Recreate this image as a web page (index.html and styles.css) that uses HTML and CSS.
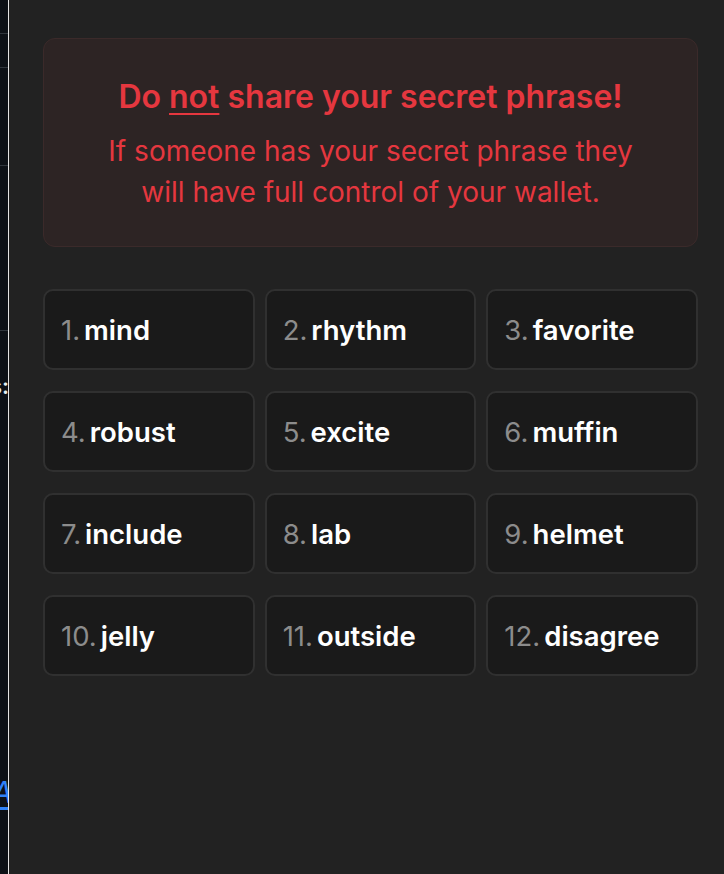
FILE: index.html
```html
<!DOCTYPE html>
<html>
<head>
<meta charset="utf-8">
<link rel="stylesheet" href="styles.css">
</head>
<body>
<div class="app">
  <aside class="side">
    <div class="accent"></div>
    <div class="row r1"></div>
    <div class="row r2"></div>
    <div class="row r3"></div>
    <div class="row r4"></div>
    <div class="sidetext">s:</div>
    <div class="sidelink">A</div>
  </aside>
  <main class="main">
    <section class="warn">
      <h1 class="warn-title">Do <u>not</u> share your secret phrase!</h1>
      <p class="warn-text">If someone has your secret phrase they<br>will have full control of your wallet.</p>
    </section>
    <section class="words">
      <div class="word"><span class="num">1.</span><span class="w">mind</span></div>
      <div class="word"><span class="num">2.</span><span class="w">rhythm</span></div>
      <div class="word"><span class="num">3.</span><span class="w">favorite</span></div>
      <div class="word"><span class="num">4.</span><span class="w">robust</span></div>
      <div class="word"><span class="num">5.</span><span class="w">excite</span></div>
      <div class="word"><span class="num">6.</span><span class="w">muffin</span></div>
      <div class="word"><span class="num">7.</span><span class="w">include</span></div>
      <div class="word"><span class="num">8.</span><span class="w">lab</span></div>
      <div class="word"><span class="num">9.</span><span class="w">helmet</span></div>
      <div class="word"><span class="num">10.</span><span class="w">jelly</span></div>
      <div class="word"><span class="num">11.</span><span class="w">outside</span></div>
      <div class="word"><span class="num">12.</span><span class="w">disagree</span></div>
    </section>
  </main>
</div>
</body>
</html>
```
FILE: styles.css
```css
html, body {
  margin: 0;
  padding: 0;
  height: 100%;
  background: #222222;
  font-family: Inter, "Noto Sans", sans-serif;
}
.app {
  display: flex;
  height: 874px;
  overflow: hidden;
}
.side {
  width: 8px;
  flex: none;
  background: #0d1117;
  border-right: 1px solid #e6e6e6;
  overflow: hidden;
  display: flex;
  flex-direction: column;
  position: relative;
}
.accent {
  position: absolute;
  left: 9px;
  top: 0;
  width: 1px;
  height: 80px;
  background: #6b5a2a;
}
.row {
  border-bottom: 1px solid #30363d;
}
.r1 { height: 33px; }
.r2 { height: 33px; }
.r3 { height: 97px; }
.r4 { height: 164px; }
.sidetext {
  margin-top: 42px;
  margin-left: -10px;
  font-size: 22px;
  font-weight: 600;
  color: #e6edf3;
  line-height: 26px;
  white-space: nowrap;
}
.sidelink {
  margin-top: 378px;
  margin-left: -8px;
  font-size: 30px;
  font-style: italic;
  color: #2f81f7;
  line-height: 30px;
  border-bottom: 3px solid #2f81f7;
  width: 20px;
}
.main {
  flex: 1;
  padding: 38px 26px 0 34px;
}
.warn {
  background: #2d2424;
  border: 1px solid #3b2a2a;
  border-radius: 12px;
  height: 209px;
  box-sizing: border-box;
  text-align: center;
  color: #e5373f;
  padding-top: 40px;
}
.warn-title {
  margin: 0;
  font-size: 32px;
  font-weight: 600;
  line-height: 36px;
}
.warn-title u {
  text-underline-offset: 5px;
  text-decoration-thickness: 2px;
}
.warn-text {
  margin: 16px 0 0;
  font-size: 28px;
  font-weight: 400;
  line-height: 41px;
}
.words {
  margin-top: 42px;
  display: grid;
  grid-template-columns: repeat(3, 1fr);
  column-gap: 10px;
  row-gap: 21px;
}
.word {
  height: 81px;
  box-sizing: border-box;
  background: #1a1a1a;
  border: 2px solid #303030;
  border-radius: 10px;
  display: flex;
  align-items: center;
  padding-left: 16px;
  font-size: 27.5px;
}
.num {
  color: #8c8c8c;
  margin-right: 4px;
}
.w {
  color: #ffffff;
  font-weight: 600;
}
```
